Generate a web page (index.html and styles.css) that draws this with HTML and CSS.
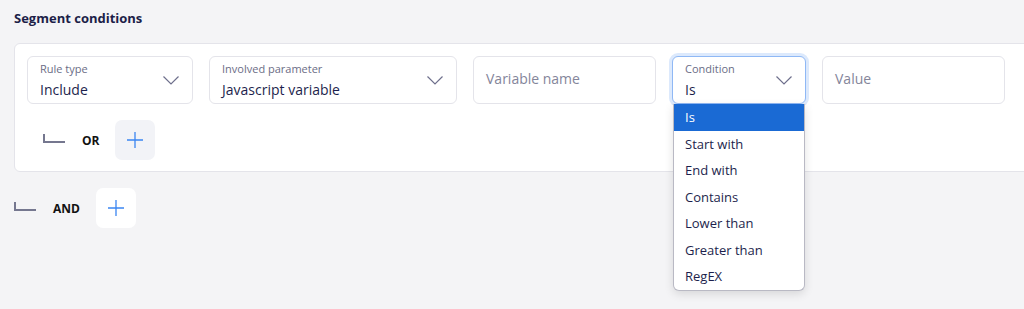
FILE: index.html
```html
<!DOCTYPE html>
<html lang="en">
<head>
    <meta charset="UTF-8">
    <title>Segment conditions</title>
    <link rel="stylesheet" href="styles.css">
</head>
<body>
    <div class="page">
        <h3 class="section-title">Segment conditions</h3>

        <div class="group-card">
            <div class="rule-row">
                <div class="field field-select w-rule">
                    <div class="field-text">
                        <span class="field-label">Rule type</span>
                        <span class="field-value">Include</span>
                    </div>
                    <svg class="chevron" width="16" height="9" viewBox="0 0 16 9"><path d="M0.5 0.5 L8 8 L15.5 0.5" fill="none" stroke="#6e6f8c" stroke-width="1.2"/></svg>
                </div>
                <div class="field field-select w-param">
                    <div class="field-text">
                        <span class="field-label">Involved parameter</span>
                        <span class="field-value">Javascript variable</span>
                    </div>
                    <svg class="chevron" width="16" height="9" viewBox="0 0 16 9"><path d="M0.5 0.5 L8 8 L15.5 0.5" fill="none" stroke="#6e6f8c" stroke-width="1.2"/></svg>
                </div>
                <div class="field w-input">
                    <span class="placeholder">Variable name</span>
                </div>
                <div class="field-wrap">
                    <div class="field field-select w-cond is-open">
                        <div class="field-text">
                            <span class="field-label">Condition</span>
                            <span class="field-value">Is</span>
                        </div>
                        <svg class="chevron" width="16" height="9" viewBox="0 0 16 9"><path d="M0.5 0.5 L8 8 L15.5 0.5" fill="none" stroke="#6e6f8c" stroke-width="1.2"/></svg>
                    </div>
                    <ul class="dropdown">
                        <li class="selected">Is</li>
                        <li>Start with</li>
                        <li>End with</li>
                        <li>Contains</li>
                        <li>Lower than</li>
                        <li>Greater than</li>
                        <li>RegEX</li>
                    </ul>
                </div>
                <div class="field w-input">
                    <span class="placeholder">Value</span>
                </div>
            </div>

            <div class="logic-row inner">
                <span class="connector"></span>
                <span class="logic-label">OR</span>
                <button class="add-button grey">
                    <svg width="16" height="16" viewBox="0 0 16 16"><path d="M8 0 V16 M0 8 H16" stroke="#3b86f2" stroke-width="1.3"/></svg>
                </button>
            </div>
        </div>

        <div class="logic-row outer">
            <span class="connector"></span>
            <span class="logic-label">AND</span>
            <button class="add-button white">
                <svg width="16" height="16" viewBox="0 0 16 16"><path d="M8 0 V16 M0 8 H16" stroke="#3b86f2" stroke-width="1.3"/></svg>
            </button>
        </div>
    </div>
</body>
</html>
```

FILE: styles.css
```css
html, body {
    margin: 0;
    padding: 0;
    height: 100%;
    overflow: hidden;
}

body {
    background-color: #f4f4f6;
    font-family: "Open Sans", "Noto Sans", sans-serif;
    color: #1d1f4d;
}

.page {
    padding: 8px 0 0 14px;
}

.section-title {
    margin: 0;
    font-size: 13px;
    font-weight: 700;
    line-height: 20px;
    color: #1c1e48;
}

.group-card {
    width: 1030px;
    margin-top: 15px;
    padding: 12px 12px 11px 12px;
    background-color: #fff;
    border: 1px solid #e4e4ea;
    border-radius: 6px;
}

.rule-row {
    display: flex;
    gap: 16px;
}

.field {
    box-sizing: border-box;
    height: 48px;
    display: flex;
    align-items: center;
    padding: 0 12px;
    background-color: #fff;
    border: 1px solid #e4e4ea;
    border-radius: 6px;
}

.field-select {
    justify-content: space-between;
}

.w-rule { width: 166px; }
.w-param { width: 248px; }
.w-input { width: 183px; }
.w-cond { width: 134px; }

.field-text {
    display: flex;
    flex-direction: column;
}

.field-label {
    font-size: 11px;
    line-height: 16px;
    color: #6b6d86;
}

.field-value {
    margin-top: 3px;
    font-size: 14px;
    line-height: 20px;
    color: #1d1f4d;
}

.placeholder {
    font-size: 14px;
    color: #84859a;
    margin-top: -3px;
}

.chevron {
    margin-right: 1px;
}

.field-wrap {
    position: relative;
}

.is-open {
    border-color: #8fb8f5;
    box-shadow: 0 0 0 3px #dce9fc;
}

.dropdown {
    position: absolute;
    top: 48px;
    left: 1px;
    width: 132px;
    box-sizing: border-box;
    margin: 0;
    padding: 0;
    list-style: none;
    background-color: #fff;
    border: 1px solid #b9b9c4;
    border-top: none;
    border-radius: 0 0 6px 6px;
    box-shadow: 0 3px 10px rgba(0, 0, 0, 0.12);
    overflow: hidden;
    z-index: 2;
}

.dropdown li {
    height: 26.5px;
    line-height: 26.5px;
    padding: 0 11px;
    font-size: 13px;
    color: #1d1f4d;
}

.dropdown li.selected {
    background-color: #1a6ad4;
    color: #fff;
}

.logic-row {
    display: flex;
    align-items: center;
}

.logic-row.inner {
    margin-top: 16px;
    padding-left: 16px;
}

.logic-row.outer {
    margin-top: 16px;
}

.connector {
    width: 22px;
    height: 9px;
    border-left: 2px solid #75778f;
    border-bottom: 2px solid #75778f;
    box-sizing: border-box;
    margin-top: -4px;
}

.logic-label {
    margin-left: 17px;
    font-size: 12px;
    font-weight: 700;
    color: #121212;
}

.add-button {
    display: flex;
    align-items: center;
    justify-content: center;
    width: 40px;
    height: 40px;
    border: none;
    border-radius: 7px;
    padding: 0;
}

.logic-row.inner .add-button {
    margin-left: 16px;
}

.logic-row.outer .add-button {
    margin-left: 16px;
}

.add-button.grey {
    background-color: #f2f3f7;
}

.add-button.white {
    background-color: #fff;
}
```
